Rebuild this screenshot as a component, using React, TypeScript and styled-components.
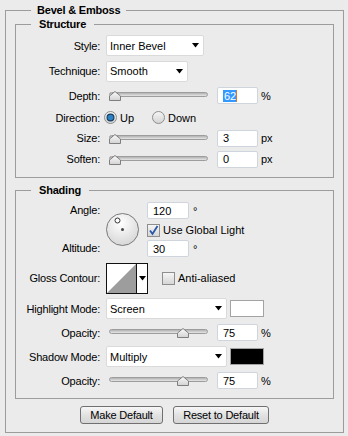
import React from "react";
import styled, { createGlobalStyle } from "styled-components";

const GlobalStyle = createGlobalStyle`
  html, body {
    margin: 0;
    padding: 0;
    background: #ebebeb;
  }
  body {
    font-family: "Liberation Sans", Arial, sans-serif;
    font-size: 11px;
    color: #000;
  }
`;

const Page = styled.div`
  width: 348px;
  height: 436px;
  box-sizing: border-box;
  padding: 4px 4px 3px 5px;
`;

const Frame = styled.fieldset`
  margin: 0;
  padding: 2px 9px 8px;
  width: 339px;
  min-width: 0;
  box-sizing: border-box;
  border: 1px solid #9c9c9c;
`;

const Title = styled.legend<{ $indent: number; $pad: number }>`
  margin-left: ${(p) => p.$indent}px;
  padding: 0 ${(p) => p.$pad}px;
  font-weight: bold;
  line-height: 12px;
  letter-spacing: -0.2px;
`;

const Section = styled.fieldset<{ $top?: number; $padTop: number; $padBottom: number }>`
  margin: ${(p) => p.$top ?? 0}px 0 0;
  padding: ${(p) => p.$padTop}px 0 ${(p) => p.$padBottom}px;
  min-width: 0;
  border: 1px solid #9c9c9c;
`;

const Row = styled.div<{ $h: number; $top?: number }>`
  display: flex;
  align-items: center;
  height: ${(p) => p.$h}px;
  margin-top: ${(p) => p.$top ?? 0}px;
`;

const Label = styled.div`
  flex: none;
  width: 84px;
  margin-right: 6px;
  text-align: right;
  white-space: nowrap;
  letter-spacing: -0.2px;
`;

const SelectBox = styled.div<{ $w: number }>`
  flex: none;
  width: ${(p) => p.$w}px;
  height: 21px;
  box-sizing: border-box;
  display: flex;
  align-items: center;
  justify-content: space-between;
  padding: 0 4px 0 3px;
  background: #fff;
  border: 1px solid #dadada;
  border-radius: 2px;
`;

const NumBox = styled.div<{ $w?: number }>`
  flex: none;
  width: ${(p) => p.$w ?? 41}px;
  height: 17px;
  box-sizing: border-box;
  display: flex;
  align-items: center;
  padding-left: 5px;
  background: #fff;
  border: 1px solid #cfd5dc;
  border-radius: 2px;
`;

const Selected = styled.span`
  background: #3399ff;
  color: #fff;
  line-height: 12px;
  padding: 0 0 0 1px;
  border-right: 1px solid #d9782c;
`;

const Unit = styled.span<{ $gap?: number }>`
  margin-left: ${(p) => p.$gap ?? 3}px;
`;

const SliderWrap = styled.div`
  position: relative;
  flex: none;
  width: 99px;
  height: 11px;
  margin: 0 9px 0 3px;
`;

const Track = styled.div`
  margin-top: 2px;
  height: 5px;
  box-sizing: border-box;
  border: 1px solid #9d9d9d;
  border-radius: 3px;
  background: linear-gradient(#b2b2b2, #e6e6e6);
`;

const ThumbMark = styled.svg<{ $left: number }>`
  position: absolute;
  top: 1px;
  left: ${(p) => p.$left}px;
`;

const Options = styled.div`
  display: flex;
  align-items: center;
  margin-left: -2px;
`;

const Option = styled.div<{ $w?: number; $offset?: number }>`
  display: flex;
  align-items: center;
  gap: 3px;
  width: ${(p) => (p.$w ? `${p.$w}px` : "auto")};
  margin-left: ${(p) => p.$offset ?? 0}px;
`;

const AngleBlock = styled.div`
  display: flex;
  height: 55px;
`;

const LabelCol = styled.div`
  display: flex;
  flex-direction: column;
  justify-content: space-between;
  ${Label} {
    line-height: 17px;
  }
`;

const DialWrap = styled.div`
  align-self: center;
  display: flex;
  margin-right: 8px;
`;

const AngleCol = styled.div`
  display: flex;
  flex-direction: column;
`;

const ContourBox = styled.div`
  flex: none;
  display: flex;
  width: 42px;
  height: 31px;
  box-sizing: border-box;
  border: 1px solid #111;
  background: #fff;
`;

const ContourArrow = styled.div`
  flex: 1;
  display: flex;
  align-items: center;
  justify-content: center;
  border-left: 1px solid #111;
  background: #fff;
`;

const Swatch = styled.div<{ $color: string }>`
  flex: none;
  width: 34px;
  height: 17px;
  box-sizing: border-box;
  margin-left: 3px;
  background: ${(p) => p.$color};
  border: 1px solid #a3a3a3;
`;

const Buttons = styled.div`
  display: flex;
  justify-content: center;
  gap: 10px;
  margin-top: 7px;
`;

const Button = styled.button<{ $w: number }>`
  width: ${(p) => p.$w}px;
  height: 18px;
  padding: 0;
  font-family: "Liberation Sans", Arial, sans-serif;
  font-size: 11px;
  color: #000;
  letter-spacing: -0.2px;
  border: 1px solid #707070;
  border-radius: 3px;
  background: linear-gradient(#f7f7f7, #e2e2e2 50%, #d6d6d6);
`;

const Caret = () => (
  <svg width="7" height="5" viewBox="0 0 7 5">
    <polygon points="0,0 7,0 3.5,4.5" fill="#000" />
  </svg>
);

const Select = ({ w, value }: { w: number; value: string }) => (
  <SelectBox $w={w}>
    <span>{value}</span>
    <Caret />
  </SelectBox>
);

const Slider = ({ pct }: { pct: number }) => {
  const left = Math.max(0, Math.min(99 - 12, (pct / 100) * 99 - 6));
  return (
    <SliderWrap>
      <Track />
      <ThumbMark $left={left} width="12" height="10" viewBox="0 0 12 10">
        <defs>
          <linearGradient id="thumbFill" x1="0" y1="0" x2="0" y2="1">
            <stop offset="0" stopColor="#fbfbfb" />
            <stop offset="1" stopColor="#d2d2d2" />
          </linearGradient>
        </defs>
        <polygon
          points="0.5,9.5 0.5,5 6,0.5 11.5,5 11.5,9.5"
          fill="url(#thumbFill)"
          stroke="#7f7f7f"
        />
      </ThumbMark>
    </SliderWrap>
  );
};

const Radio = ({ on }: { on?: boolean }) => (
  <svg width="13" height="13" viewBox="0 0 13 13">
    <defs>
      <linearGradient id="radioFill" x1="0" y1="0" x2="0" y2="1">
        <stop offset="0" stopColor="#f6f6f6" />
        <stop offset="1" stopColor="#d3d3d3" />
      </linearGradient>
    </defs>
    <circle cx="6.5" cy="6.5" r="6" fill="url(#radioFill)" stroke="#8e8e8e" />
    {on && <circle cx="6.5" cy="6.5" r="3.4" fill="#2b83c6" stroke="#1d3d5e" strokeWidth="1.2" />}
  </svg>
);

const Check = ({ on }: { on?: boolean }) => (
  <svg width="13" height="13" viewBox="0 0 13 13">
    <defs>
      <linearGradient id="checkFill" x1="0" y1="0" x2="0" y2="1">
        <stop offset="0" stopColor="#f7f7f7" />
        <stop offset="1" stopColor="#d4d4d4" />
      </linearGradient>
    </defs>
    <rect x="0.5" y="0.5" width="12" height="12" fill="url(#checkFill)" stroke="#8e8e8e" />
    {on && (
      <polyline
        points="3,6.5 5.5,10 10.5,2"
        fill="none"
        stroke="#2a57a8"
        strokeWidth="1.8"
      />
    )}
  </svg>
);

const Dial = () => (
  <svg width="33" height="33" viewBox="0 0 33 33">
    <defs>
      <radialGradient id="dialFill" cx="45%" cy="30%" r="75%">
        <stop offset="0" stopColor="#ffffff" />
        <stop offset="1" stopColor="#d4d4d4" />
      </radialGradient>
    </defs>
    <circle cx="16.5" cy="16.5" r="16" fill="url(#dialFill)" stroke="#7a7a7a" />
    <circle cx="16.5" cy="16.5" r="1.5" fill="#444" />
    <circle cx="11.5" cy="7.5" r="2.5" fill="#fff" stroke="#333" />
  </svg>
);

const Contour = () => (
  <ContourBox>
    <svg width="29" height="29" viewBox="0 0 29 29">
      <rect width="29" height="29" fill="#fff" />
      <polygon points="0,29 29,0 29,29" fill="#9d9d9d" />
    </svg>
    <ContourArrow>
      <Caret />
    </ContourArrow>
  </ContourBox>
);

export default function App() {
  return (
    <Page>
      <GlobalStyle />
      <Frame>
        <Title $indent={16} $pad={6}>Bevel &amp; Emboss</Title>

        <Section $padTop={3} $padBottom={7}>
          <Title $indent={15} $pad={8}>Structure</Title>
          <Row $h={25}>
            <Label>Style:</Label>
            <Select w={98} value="Inner Bevel" />
          </Row>
          <Row $h={26}>
            <Label>Technique:</Label>
            <Select w={82} value="Smooth" />
          </Row>
          <Row $h={23}>
            <Label>Depth:</Label>
            <Slider pct={0} />
            <NumBox>
              <Selected>62</Selected>
            </NumBox>
            <Unit>%</Unit>
          </Row>
          <Row $h={21}>
            <Label>Direction:</Label>
            <Options>
              <Option $w={48}>
                <Radio on />
                <span>Up</span>
              </Option>
              <Option>
                <Radio />
                <span>Down</span>
              </Option>
            </Options>
          </Row>
          <Row $h={20}>
            <Label>Size:</Label>
            <Slider pct={0} />
            <NumBox>3</NumBox>
            <Unit>px</Unit>
          </Row>
          <Row $h={22}>
            <Label>Soften:</Label>
            <Slider pct={0} />
            <NumBox>0</NumBox>
            <Unit>px</Unit>
          </Row>
        </Section>

        <Section $top={6} $padTop={6} $padBottom={5}>
          <Title $indent={15} $pad={8}>Shading</Title>
          <AngleBlock>
            <LabelCol>
              <Label>Angle:</Label>
              <Label>Altitude:</Label>
            </LabelCol>
            <DialWrap>
              <Dial />
            </DialWrap>
            <AngleCol>
              <Row $h={17}>
                <NumBox $w={42}>120</NumBox>
                <Unit $gap={4}>°</Unit>
              </Row>
              <Row $h={14} $top={4}>
                <Option>
                  <Check on />
                  <span>Use Global Light</span>
                </Option>
              </Row>
              <Row $h={17} $top={3}>
                <NumBox $w={42}>30</NumBox>
                <Unit $gap={4}>°</Unit>
              </Row>
            </AngleCol>
          </AngleBlock>
          <Row $h={38} $top={2}>
            <Label>Gloss Contour:</Label>
            <Contour />
            <Option $offset={14}>
              <Check />
              <span>Anti-aliased</span>
            </Option>
          </Row>
          <Row $h={23}>
            <Label>Highlight Mode:</Label>
            <Select w={121} value="Screen" />
            <Swatch $color="#fff" />
          </Row>
          <Row $h={25}>
            <Label>Opacity:</Label>
            <Slider pct={75} />
            <NumBox>75</NumBox>
            <Unit>%</Unit>
          </Row>
          <Row $h={23}>
            <Label>Shadow Mode:</Label>
            <Select w={121} value="Multiply" />
            <Swatch $color="#000" />
          </Row>
          <Row $h={25}>
            <Label>Opacity:</Label>
            <Slider pct={75} />
            <NumBox>75</NumBox>
            <Unit>%</Unit>
          </Row>
        </Section>

        <Buttons>
          <Button $w={83}>Make Default</Button>
          <Button $w={96}>Reset to Default</Button>
        </Buttons>
      </Frame>
    </Page>
  );
}
